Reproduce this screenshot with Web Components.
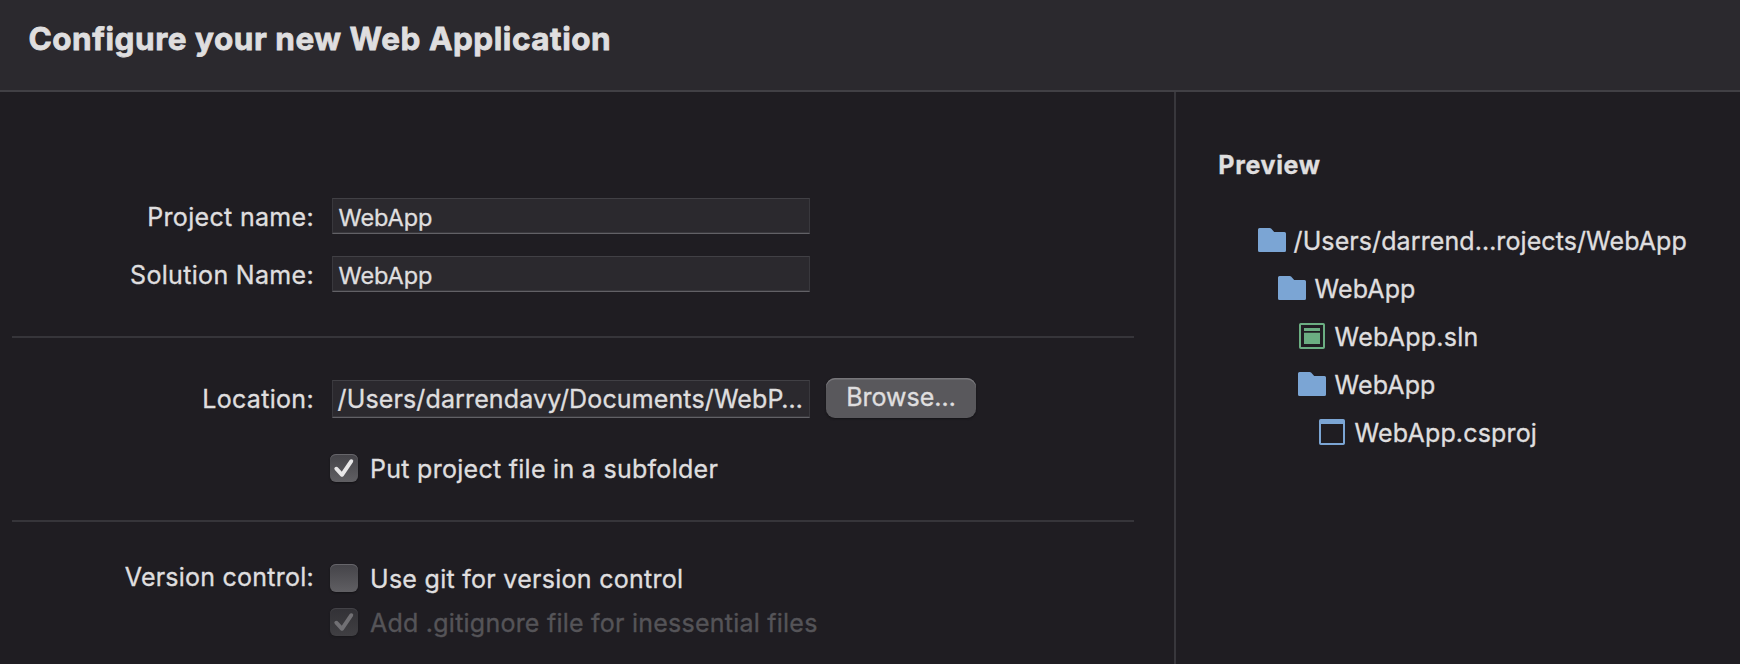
<!DOCTYPE html>
<html lang="en">
<head>
<meta charset="utf-8">
<title>Configure your new Web Application</title>
<style>
  html, body { margin: 0; height: 100%; background: #1f1d22; }
  body { font: 400 25px/30px Inter, "Liberation Sans", sans-serif; color: #dfdedf; overflow: hidden;
         -webkit-text-stroke: .35px currentColor; }
</style>
</head>
<body>
<config-dialog></config-dialog>
<script>
const define = (name, html) => {
  const template = document.createElement('template');
  template.innerHTML = html;
  customElements.define(name, class extends HTMLElement {
    constructor() {
      super();
      this.attachShadow({ mode: 'open' }).append(template.content.cloneNode(true));
    }
  });
};

define('dialog-header', `
  <style>
    :host { display: block; box-sizing: border-box; height: 92px; padding: 19px 0 0 28.4px;
            background: #2b292e; border-bottom: 2px solid #414045; }
    h1 { margin: 0; font-size: 31.5px; line-height: 39px; font-weight: 700; letter-spacing: .53px;
         -webkit-text-stroke: .8px currentColor; }
  </style>
  <h1><slot></slot></h1>`);

define('form-section', `
  <style>
    :host { display: flex; flex-direction: column; box-sizing: border-box; margin: 0 40px 0 0; }
    .rule { height: 2px; margin-left: 12px; background: #36353a; }
    :host([first]) .rule { display: none; }
  </style>
  <div class="rule"></div>
  <slot></slot>`);

define('form-row', `
  <style>
    :host { display: flex; align-items: flex-start; }
    .label { flex: none; box-sizing: border-box; width: 314px; padding-top: var(--label-top, 0);
             text-align: right; white-space: nowrap; letter-spacing: var(--label-track, .32px); }
    .body { display: flex; flex-direction: column; gap: 14px; padding-left: var(--body-left, 18px);
            padding-top: var(--body-top, 0); }
  </style>
  <div class="label"><slot name="label"></slot></div>
  <div class="body"><slot></slot></div>`);

define('text-field', `
  <style>
    :host { display: block; box-sizing: border-box; width: 478px; height: 36px; padding: 4px 0 0 5.6px;
            background: #2b292e; border: 1px solid #39383d; border-top-color: #414045;
            border-bottom-color: #626166; box-shadow: inset 0 -1px #39383d;
            font-size: 23.5px; line-height: 29px; letter-spacing: -.1px; white-space: nowrap; overflow: hidden; }
    :host([large]) { height: 38px; padding: 3px 0 0 4.6px; margin-top: 2px;
                     font-size: 25px; line-height: 30px; letter-spacing: .13px; }
  </style>
  <slot></slot>`);

define('push-button', `
  <style>
    :host { display: block; }
    button { display: block; box-sizing: border-box; width: 150px; height: 40px; margin: 0; border: 0;
             padding: 4px 0 6px; border-radius: 9px; background: #59585c; color: inherit; font: inherit;
             box-shadow: inset 0 1.5px #77767a, 0 1px 2px #141316; letter-spacing: 0; }
  </style>
  <button type="button"><slot></slot></button>`);

define('check-box', `
  <style>
    :host { display: flex; gap: 12px; align-items: flex-start; white-space: nowrap; letter-spacing: .28px; }
    .box { flex: none; width: 28px; height: 28px; border-radius: 6px;
           background: linear-gradient(#444348, #605f63);
           box-shadow: inset 0 1px #66656a, 0 1px 2px #141316; }
    svg { display: none; width: 28px; height: 28px; }
    :host([checked]) svg { display: block; }
    path { fill: none; stroke: #e8e7e8; stroke-width: 3.9; stroke-linecap: round; stroke-linejoin: round; }
    :host([disabled]) { color: #555458; letter-spacing: .235px; }
    :host([disabled]) .box { background: linear-gradient(#323136, #403f43);
           box-shadow: inset 0 1px #434247, 0 1px 2px #19181b; }
    :host([disabled]) path { stroke: #717074; }
  </style>
  <div class="box"><svg viewBox="0 0 28 28"><path d="M6.300 14.700 12 20.800 21.300 7.200"/></svg></div>
  <div><slot></slot></div>`);

const icons = {
  folder: '<path fill="#7ba5d4" d="M1.500 2h10.200q.8 0 1.400.6L16.200 6H26.500Q28 6 28 7.500V24.500Q28 26 26.500 26H1.500Q0 26 0 24.500V3.500Q0 2 1.500 2Z"/>',
  solution: '<rect x="2" y="2" width="24" height="24" rx=".8" fill="none" stroke="#6bae82" stroke-width="2"/><path fill="#6bae82" d="M6 6h16v3H6zM6 10.700h16V22H6z"/>',
  project: '<rect x="2" y="2" width="24" height="24" rx=".8" fill="none" stroke="#7ba5d4" stroke-width="2"/><path fill="#7ba5d4" d="M2 2h24v4H2z"/>'
};

customElements.define('tree-item', class extends HTMLElement {
  constructor() {
    super();
    this.attachShadow({ mode: 'open' }).innerHTML = `
      <style>
        :host { display: flex; gap: 8.6px; height: 30px; white-space: nowrap;
                padding-left: calc(20px * var(--level, 0)); letter-spacing: var(--track, .1px); }
        :host([root]) { gap: 7.6px; }
        svg { flex: none; width: 28px; height: 30px; }
      </style>
      <svg viewBox="0 0 28 30">${icons[this.getAttribute('icon')] || ''}</svg>
      <span><slot></slot></span>`;
  }
});

define('preview-pane', `
  <style>
    :host { display: block; flex: 1; box-sizing: border-box; border-left: 2px solid #38373c; padding: 58px 0 0 42.300px; }
    h2 { margin: 0 0 46px; font-size: 25px; line-height: 30px; font-weight: 700; letter-spacing: .66px; }
    .tree { display: flex; flex-direction: column; gap: 18px; padding-left: 39.700px; }
  </style>
  <h2><slot name="title"></slot></h2>
  <div class="tree"><slot></slot></div>`);

define('config-dialog', `
  <style>
    :host { display: flex; flex-direction: column; height: 664px; background: #1f1d22; }
    main { flex: 1; display: flex; min-height: 0; }
    .form { width: 1174px; flex: none; }
    .names { padding: 106px 0 44px; gap: 22px; --label-top: 4px; }
    .location form-row:first-of-type { padding-top: 40px; --label-top: 6px; }
    .place { display: flex; gap: 16px; }
    .sub { padding: 36px 0; --body-left: 16px; }
    .vcs { padding-top: 40px; --body-left: 16px; --body-top: 2px; --label-track: .24px; }
  </style>
  <dialog-header>Configure your new Web Application</dialog-header>
  <main>
    <div class="form">
      <form-section first class="names">
        <form-row><span slot="label">Project name:</span><text-field>WebApp</text-field></form-row>
        <form-row><span slot="label">Solution Name:</span><text-field>WebApp</text-field></form-row>
      </form-section>
      <form-section class="location">
        <form-row><span slot="label">Location:</span>
          <div class="place"><text-field large>/Users/darrendavy/Documents/WebP…</text-field><push-button>Browse…</push-button></div>
        </form-row>
        <form-row class="sub"><check-box checked>Put project file in a subfolder</check-box></form-row>
      </form-section>
      <form-section>
        <form-row class="vcs"><span slot="label">Version control:</span>
          <check-box>Use git for version control</check-box>
          <check-box checked disabled>Add .gitignore file for inessential files</check-box>
        </form-row>
      </form-section>
    </div>
    <preview-pane>
      <span slot="title">Preview</span>
      <tree-item root icon="folder" style="--track:.09px">/Users/darrend…rojects/WebApp</tree-item>
      <tree-item icon="folder" style="--level:1">WebApp</tree-item>
      <tree-item icon="solution" style="--level:2;--track:.25px">WebApp.sln</tree-item>
      <tree-item icon="folder" style="--level:2">WebApp</tree-item>
      <tree-item icon="project" style="--level:3;--track:.17px">WebApp.csproj</tree-item>
    </preview-pane>
  </main>`);
</script>
</body>
</html>
